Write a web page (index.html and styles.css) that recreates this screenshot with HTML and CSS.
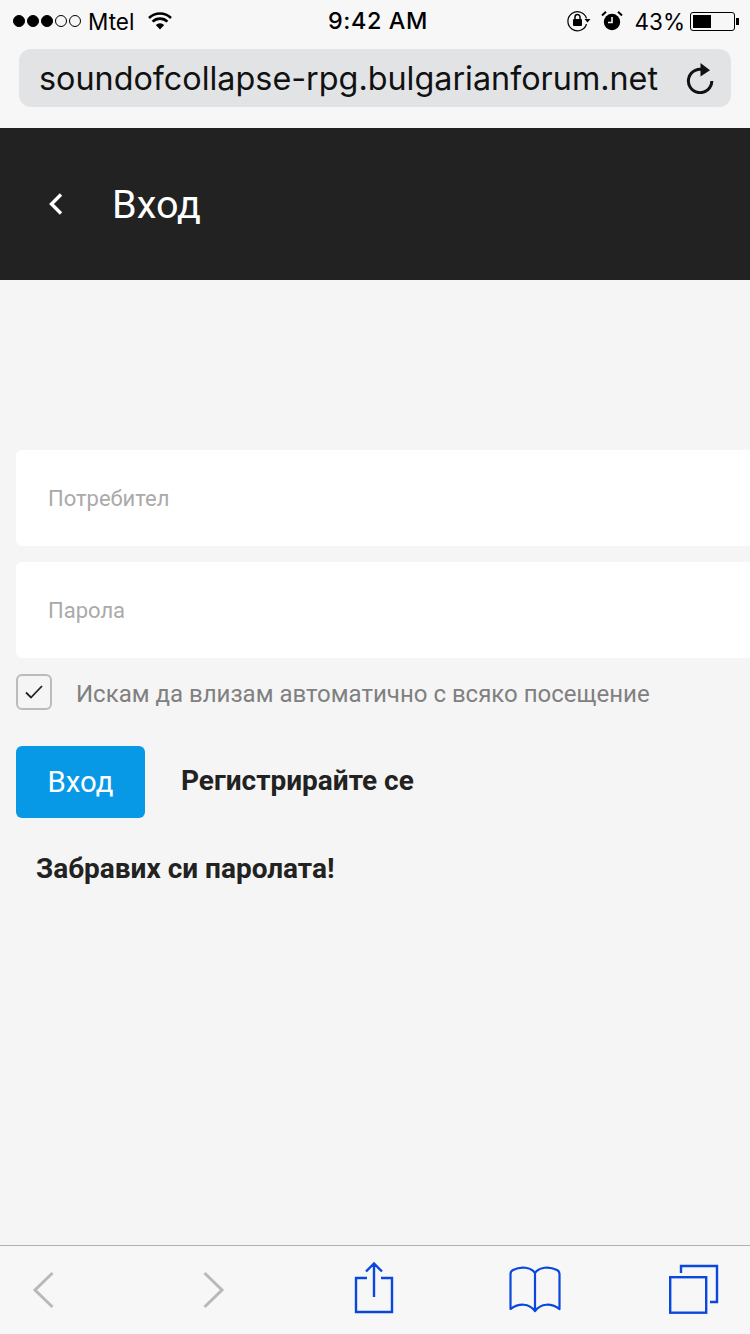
FILE: index.html
```html
<!DOCTYPE html>
<html lang="bg">
<head>
<meta charset="utf-8">
<title>Вход</title>
<link rel="stylesheet" href="styles.css">
</head>
<body>
<header class="browser">
  <div class="status">
    <div class="status-left">
      <span class="signal"><i class="dot on"></i><i class="dot on"></i><i class="dot on"></i><i class="dot"></i><i class="dot"></i></span>
      <span class="carrier">Mtel</span>
      <svg class="wifi" width="26" height="20" viewBox="0 0 26 20"><path d="M13 18.500 8.800 13.900a6.200 6.200 0 0 1 8.400 0Z" fill="#000"/><path d="M5.600 10.600a10.600 10.600 0 0 1 14.800 0M2 7a15.800 15.800 0 0 1 22 0" fill="none" stroke="#000" stroke-width="2.600"/></svg>
    </div>
    <div class="clock">9:42 AM</div>
    <div class="status-right">
      <svg class="lock" width="24" height="22" viewBox="0 0 24 22"><path d="M19.500 8.500A9.500 9.500 0 1 0 19.500 14" fill="none" stroke="#000" stroke-width="1.200"/><path d="M17.500 9h6l-3 3.600Z" fill="#000"/><rect x="6" y="9" width="9" height="7" rx="1" fill="#000"/><path d="M8 9V7a2.500 2.500 0 0 1 5 0v2" fill="none" stroke="#000" stroke-width="1.500"/></svg>
      <svg class="alarm" width="22" height="22" viewBox="0 0 22 22"><circle cx="11" cy="12" r="8.200" fill="#000"/><path d="M11 7v5.500H7" fill="none" stroke="#f7f7f7" stroke-width="1.600"/><path d="M1 5.500 5 1.800M21 5.500 17 1.800" stroke="#000" stroke-width="2"/></svg>
      <span class="percent">43%</span>
      <span class="battery"><span class="battery-fill"></span></span><span class="battery-tip"></span>
    </div>
  </div>
  <div class="address">
    <span class="url">soundofcollapse-rpg.bulgarianforum.net</span>
    <svg class="reload" width="28" height="32" viewBox="0 0 28 32"><path d="M19 8.300A11.700 11.700 0 1 0 25.800 19" fill="none" stroke="#111" stroke-width="3"/><path d="M14.500 1 24 8.200 14.500 14.500Z" fill="#111"/></svg>
  </div>
</header>

<div class="titlebar">
  <svg class="back" width="16" height="24" viewBox="0 0 16 24"><path d="M13 2.500 3.500 12 13 21.500" fill="none" stroke="#fff" stroke-width="3.400"/></svg>
  <h1 class="title">Вход</h1>
</div>

<main class="content">
  <div class="field">Потребител</div>
  <div class="field">Парола</div>
  <div class="remember">
    <span class="checkbox">
      <svg width="18" height="14" viewBox="0 0 18 14"><path d="M1 7.500 6 12.500 17 1" fill="none" stroke="#222" stroke-width="1.800"/></svg>
    </span>
    <span class="remember-label">Искам да влизам автоматично с всяко посещение</span>
  </div>
  <div class="actions">
    <span class="button">Вход</span>
    <span class="link">Регистрирайте се</span>
  </div>
  <div class="forgot">Забравих си паролата!</div>
</main>

<footer class="toolbar">
  <svg class="tool-back" width="24" height="38" viewBox="0 0 24 38"><path d="M20.500 2 3 19 20.500 36" fill="none" stroke="#b9b9b9" stroke-width="3"/></svg>
  <svg class="tool-forward" width="24" height="38" viewBox="0 0 24 38"><path d="M3.500 2 21 19 3.500 36" fill="none" stroke="#b9b9b9" stroke-width="3"/></svg>
  <svg class="tool-share" width="40" height="52" viewBox="0 0 40 52"><path d="M13 16H2V50H38V16H27M20 35V2M12 9.500 20 1.500 28 9.500" fill="none" stroke="#0a47dc" stroke-width="2.400"/></svg>
  <svg class="tool-book" width="52" height="48" viewBox="0 0 52 48"><path d="M26 8C22 2 12 1 4 5C2 6 1.500 7 1.500 9V44C10 38 20 38 26 46C32 38 42 38 50.500 44V9C50.500 7 50 6 48 5C40 1 30 2 26 8ZM26 8V46" fill="none" stroke="#0a47dc" stroke-width="2.200" stroke-linejoin="round"/></svg>
  <svg class="tool-tabs" width="50" height="50" viewBox="0 0 50 50"><path d="M12 9V2H48V38H41" fill="none" stroke="#0a47dc" stroke-width="2.400"/><rect x="1.200" y="13.200" width="36" height="35.500" fill="none" stroke="#0a47dc" stroke-width="2.400"/></svg>
</footer>
</body>
</html>
```
FILE: styles.css
```css
* { box-sizing: border-box; }
html, body { margin: 0; padding: 0; }
body {
  width: 750px;
  height: 1334px;
  display: flex;
  flex-direction: column;
  overflow: hidden;
  background: #f5f5f5;
  font-family: Roboto, "Liberation Sans", sans-serif;
  color: #222;
}
.browser {
  height: 128px;
  background: #f7f7f7;
  font-family: Inter, Roboto, sans-serif;
  color: #000;
}
.status {
  height: 49px;
  padding: 0 11px 7px 13px;
  display: grid;
  grid-template-columns: 1fr auto 1fr;
  align-items: center;
}
.status-left { display: flex; align-items: center; }
.signal { display: flex; gap: 2px; }
.dot {
  width: 12px;
  height: 12px;
  border-radius: 50%;
  border: 1px solid #000;
}
.dot.on { background: #000; }
.carrier { font-size: 22.500px; margin-left: 7px; }
.wifi { margin-left: 13px; }
.clock { font-size: 23.400px; font-weight: 500; letter-spacing: .6px; margin-left: 4px; margin-bottom: 2px; }
.status-right { display: flex; align-items: center; justify-content: flex-end; }
.alarm { margin-left: 10px; }
.percent { font-size: 22.500px; margin-left: 11px; }
.battery {
  width: 45px;
  height: 19px;
  margin-left: 5px;
  padding: 2px;
  border: 1px solid #000;
  border-radius: 3px;
  display: flex;
}
.battery-fill { width: 18px; background: #000; }
.battery-tip { width: 3px; height: 7px; background: #000; margin-left: 1px; }
.address {
  height: 58px;
  margin: 0 19px;
  padding: 0 17px 0 20px;
  border-radius: 12px;
  background: #e2e3e5;
  display: flex;
  align-items: center;
  justify-content: space-between;
}
.url { font-size: 32.350px; color: #111; white-space: nowrap; }
.titlebar {
  height: 152px;
  padding-left: 48px;
  background: #222;
  display: flex;
  align-items: center;
  color: #fff;
}
.back { margin-right: 48px; }
.title { margin: 0; font-size: 39.600px; font-weight: 400; }
.content {
  flex: 1;
  padding: 170px 0 0 16px;
  display: flex;
  flex-direction: column;
}
.field {
  height: 96px;
  margin-bottom: 16px;
  padding-left: 32px;
  display: flex;
  align-items: center;
  background: #fff;
  border-radius: 6px 0 0 6px;
  font-size: 22px;
  color: #aaa;
}
.remember {
  display: flex;
  align-items: center;
}
.checkbox {
  width: 36px;
  height: 36px;
  border: 2px solid #bbb;
  border-radius: 6px;
  display: flex;
  align-items: center;
  justify-content: center;
}
.remember-label { margin-left: 24px; padding-top: 4px; font-size: 24px; color: #808080; }
.actions { display: flex; align-items: center; margin-top: 36px; }
.button {
  width: 129px;
  height: 72px;
  border-radius: 6px;
  background: #0899e6;
  color: #fff;
  font-size: 29.400px;
  display: flex;
  align-items: center;
  justify-content: center;
}
.link { margin: 0 0 4px 36px; font-size: 28px; font-weight: 700; }
.forgot { margin: 34px 0 0 20px; font-size: 28px; font-weight: 700; }
.toolbar {
  height: 89px;
  flex: none;
  padding-left: 32px;
  border-top: 1px solid #b0b0b0;
  background: #f7f7f7;
  display: flex;
  align-items: center;
}
.tool-forward { margin-left: 145px; }
.tool-share { margin: 0 0 4px 129px; }
.tool-book { margin: 0 0 2px 115px; }
.tool-tabs { margin: 0 0 2px 108px; }
```
